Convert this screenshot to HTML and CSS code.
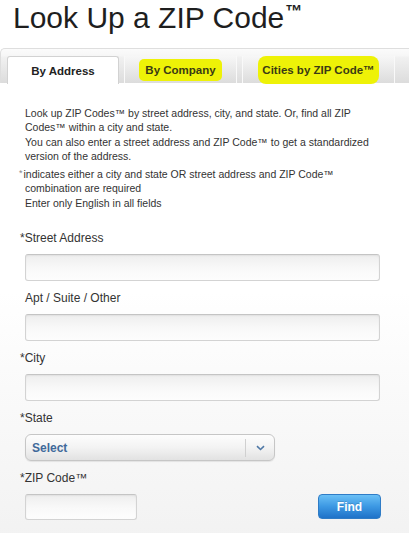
FILE: index.html
```html
<!DOCTYPE html>
<html lang="en">
<head>
<meta charset="utf-8">
<title>Look Up a ZIP Code</title>
<link rel="stylesheet" href="styles.css">
</head>
<body>
<h1 class="title">Look Up a ZIP Code<sup class="tm">™</sup></h1>
<div class="panel">
  <div class="tabs">
    <div class="tab active">By Address</div>
    <div class="tab"><span class="hl">By Company</span></div>
    <div class="tab wide"><span class="hl tall">Cities by ZIP Code™</span></div>
  </div>
  <div class="content">
    <div class="intro">
      <p>Look up ZIP Codes™ by street address, city, and state. Or, find all ZIP Codes™ within a city and state.</p>
      <p>You can also enter a street address and ZIP Code™ to get a standardized version of the address.</p>
      <p class="note"><span class="req">*</span>indicates either a city and state OR street address and ZIP Code™ combination are required</p>
      <p class="last">Enter only English in all fields</p>
    </div>
    <form class="form">
      <div class="field">
        <label class="label"><span class="star">*</span>Street Address</label>
        <input class="text full" type="text">
      </div>
      <div class="field">
        <label class="label">Apt / Suite / Other</label>
        <input class="text full" type="text">
      </div>
      <div class="field">
        <label class="label"><span class="star">*</span>City</label>
        <input class="text full" type="text">
      </div>
      <div class="field">
        <label class="label"><span class="star">*</span>State</label>
        <div class="select">
          <span class="select-value">Select</span>
          <span class="select-arrow">
            <svg width="9" height="6" viewBox="0 0 9 6"><path d="M1 1.2 L4.5 4.5 L8 1.2" fill="none" stroke="#4f78a6" stroke-width="1.6"/></svg>
          </span>
        </div>
      </div>
      <div class="field">
        <label class="label"><span class="star">*</span>ZIP Code™</label>
        <div class="zip-row">
          <input class="text zip" type="text">
          <button class="find" type="button">Find</button>
        </div>
      </div>
    </form>
  </div>
</div>
</body>
</html>
```

FILE: styles.css
```css
html, body {
  margin: 0;
  padding: 0;
  background: #ffffff;
}
body {
  font-family: "Liberation Sans", Arial, sans-serif;
  color: #333333;
  width: 409px;
  overflow: hidden;
}
.title {
  margin: 0;
  padding-left: 13px;
  font-size: 30px;
  font-weight: normal;
  line-height: 36px;
  height: 36px;
  color: #1e1e1e;
  white-space: nowrap;
}
.tm {
  font-size: 17px;
  font-weight: bold;
  vertical-align: 11px;
  line-height: 0;
  margin-left: 1px;
}
.panel {
  margin-top: 12px;
}
.tabs {
  display: flex;
  align-items: flex-end;
  padding: 7px 0 0 6px;
  border-top: 1px solid #dedede;
  border-left: 1px solid #dedede;
  border-top-left-radius: 5px;
  background: linear-gradient(to bottom, #fbfbfb 0, #f6f6f6 7px, #f1f1f1 8px, #dcdcdc 100%);
  height: 27px;
}
.tab {
  box-sizing: border-box;
  width: 113px;
  height: 27px;
  margin-right: 5px;
  display: flex;
  align-items: center;
  justify-content: center;
  font-size: 11.5px;
  font-weight: bold;
  color: #3a3a14;
  background: linear-gradient(to bottom, #f7f7f7, #dcdcdc);
  border-left: 1px solid #f9f9f9;
  border-right: 1px solid #f9f9f9;
}
.tab.active {
  width: 112px;
  background: #ffffff;
  color: #222222;
  border: 1px solid #d2d2d2;
  border-bottom: none;
  border-radius: 3px 3px 0 0;
  height: 28px;
  margin-bottom: -1px;
}
.tab.wide {
  width: 153px;
}
.hl {
  background: #eef207;
  padding: 5px 6px;
  border-radius: 5px;
}
.hl.tall {
  padding: 8px 4px;
  border-radius: 8px;
}
.content {
  padding: 23px 0 15px 25px;
  background: linear-gradient(to bottom, #ffffff 0, #ffffff 45%, #f2f2f2 100%);
}
.intro {
  width: 368px;
  font-size: 10.5px;
  line-height: 14px;
  color: #333333;
}
.intro p {
  margin: 1px 0 0;
}
.intro p:first-child {
  margin-top: 0;
}
.intro p.note {
  margin-top: 3px;
}
.req {
  color: #8a8a8a;
  font-size: 9px;
  margin-left: -6px;
  margin-right: 1px;
  vertical-align: 2px;
}
.form {
  margin-top: 21px;
}
.field {
  margin-bottom: 10px;
}
.label {
  display: block;
  font-size: 12px;
  line-height: 15px;
  color: #333333;
  margin-bottom: 8px;
}
.star {
  margin-left: -5px;
}
.text {
  box-sizing: border-box;
  display: block;
  margin: 0;
  height: 27px;
  border: 1px solid #d3d3d3;
  border-top-color: #c4c4c4;
  border-radius: 3px;
  background: linear-gradient(to bottom, #eeeeee 0, #f9f9f9 55%, #fdfdfd 100%);
  box-shadow: inset 0 1px 2px rgba(0, 0, 0, 0.06);
  font-family: inherit;
  font-size: 12px;
  outline: none;
}
.full {
  width: 355px;
}
.select {
  box-sizing: border-box;
  width: 250px;
  height: 27px;
  display: flex;
  align-items: center;
  border: 1px solid #c6c6c6;
  border-radius: 6px;
  background: linear-gradient(to bottom, #fdfdfd 0, #f3f3f3 50%, #e2e2e2 100%);
  box-shadow: 0 1px 1px rgba(0, 0, 0, 0.08);
}
.select-value {
  flex: 1;
  padding-left: 6px;
  font-size: 12px;
  font-weight: bold;
  color: #40699a;
}
.select-arrow {
  width: 28px;
  height: 18px;
  border-left: 1px solid #d0d0d0;
  display: flex;
  align-items: center;
  justify-content: center;
}
.select-arrow svg {
  display: block;
}
.zip-row {
  width: 356px;
  display: flex;
  justify-content: space-between;
  align-items: flex-start;
}
.zip {
  width: 112px;
  height: 26px;
}
.find {
  box-sizing: border-box;
  width: 63px;
  height: 25px;
  margin: 0;
  padding: 0;
  border: 1px solid #2f7cc6;
  border-radius: 4px;
  background: linear-gradient(to bottom, #6ac0f6 0, #3c98e3 50%, #1f72c8 100%);
  color: #ffffff;
  font-family: inherit;
  font-size: 12px;
  font-weight: bold;
  text-shadow: 0 -1px 0 rgba(0, 0, 0, 0.15);
  cursor: pointer;
}
```
